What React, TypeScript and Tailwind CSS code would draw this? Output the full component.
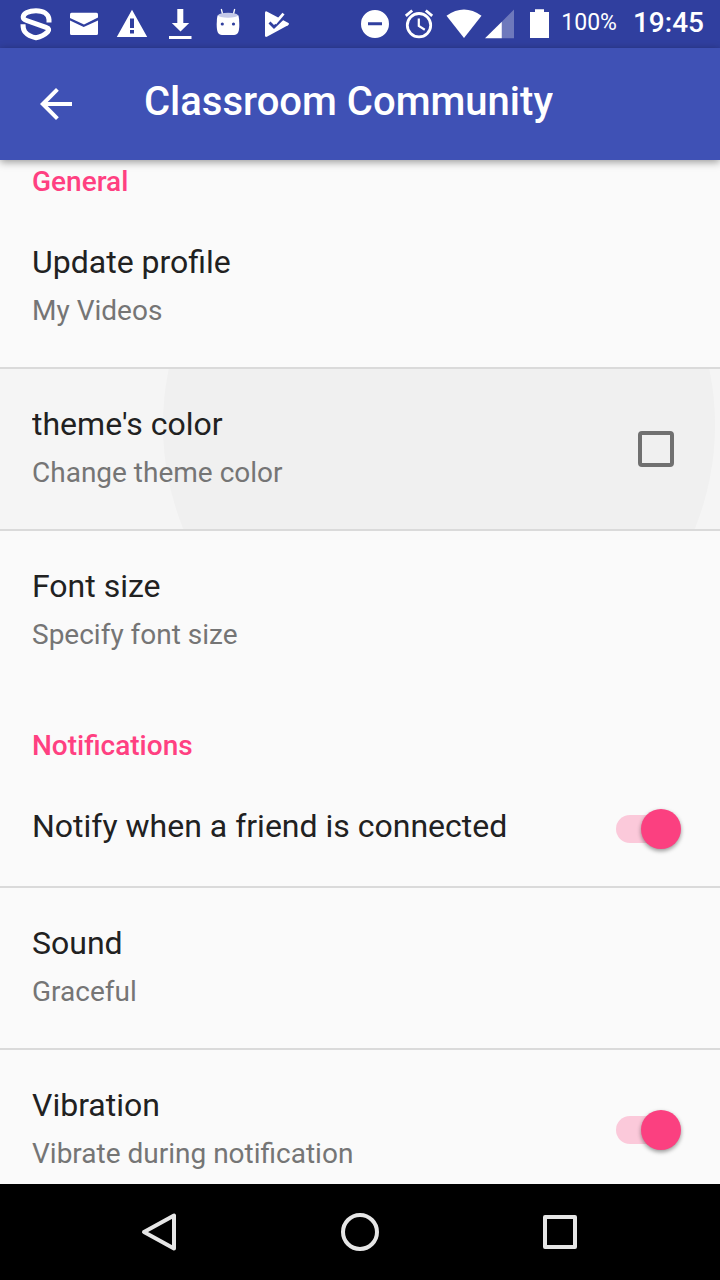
import { useState, type ReactNode } from "react";

function StatusIcon({ box, className, children }: { box: string; className: string; children: ReactNode }) {
  return (
    <svg viewBox={box} className={`h-12 shrink-0 ${className}`} fill="#fff" aria-hidden="true">
      {children}
    </svg>
  );
}

function StatusBar() {
  return (
    <div className="flex h-12 shrink-0 items-center justify-between bg-[#303f9f] pr-4 pl-3 text-white">
      <div className="flex">
        <StatusIcon box="12 0 48 48" className="w-12">
          <path
            d="M49 22.500V19.500C48.500 14 43.500 10.800 36 10.800C28.500 10.800 23.500 13.500 23.200 17C23.200 19 24 19.600 26.500 20.500L46 27.300C49.300 28.500 49.300 30 47.500 32C44.500 35 40 37 36 37.800C32 37 27.500 35 25 32C23.500 30.200 23 28 23 24.300"
            fill="none"
            stroke="#fff"
            strokeWidth="5"
          />
        </StatusIcon>
        <StatusIcon box="60 0 48 48" className="w-12">
          <path d="M71.5 12.700h25q1.500 0 1.500 1.500v3.300l-14 7-14-6.500v-3.800q0-1.500 1.500-1.500z" />
          <path d="M70 20.500l13.700 6.500L98 20.500V33.500q0 1.500-1.500 1.500h-25q-1.500 0-1.500-1.500z" />
        </StatusIcon>
        <StatusIcon box="108 0 48 48" className="w-12">
          <path fillRule="evenodd" d="M132 9.700L147.200 37H116.800zM130 18.500v9.500h4v-9.500zM130 30v3.400h4V30z" />
        </StatusIcon>
        <StatusIcon box="156 0 48 48" className="w-12">
          <path d="M177.300 9h6v14h5.900l-8.700 8.500-8.700-8.500h5.500zM169 36h22.500v3H169z" />
        </StatusIcon>
        <StatusIcon box="204 0 48 48" className="w-12">
          <path d="M221.300 9l1.500 6M234.700 9l-1.500 6" stroke="#fff" strokeWidth="1.300" />
          <path d="M217.500 15.500q10.500-4 21 0 .8 3 .8 9c0 7-1.300 10.500-5.300 10.500h-12c-4 0-5.300-3.500-5.300-10.500q0-6 .8-9z" />
          <ellipse cx="228" cy="15.300" rx="9.800" ry="2.500" fill="#c5cae9" />
          <circle cx="222.300" cy="24" r="1.600" fill="#303f9f" />
          <circle cx="233.500" cy="24" r="1.600" fill="#303f9f" />
        </StatusIcon>
        <StatusIcon box="252 0 48 48" className="w-12">
          <path d="M265 13q0-2.500 2.300-1.300L288 22.800q2 1.200 0 2.400L267.300 36.500q-2.300 1.200-2.300-1.300z" />
          <path d="M269.500 22.500l4.500 4.500L286 15.500" fill="none" stroke="#303f9f" strokeWidth="2.800" />
          <path d="M275 23.500l8.500-9.800" fill="none" stroke="#fff" strokeWidth="2.800" />
        </StatusIcon>
      </div>
      <div className="flex items-center">
        <StatusIcon box="353 0 44 48" className="w-11">
          <path fillRule="evenodd" d="M375 10a14 14 0 100 28 14 14 0 000-28zM368 22.300h14v3h-14z" />
        </StatusIcon>
        <StatusIcon box="397 0 49 48" className="w-[49px]">
          <g fill="none" stroke="#fff" strokeWidth="2.800">
            <circle cx="419" cy="25.200" r="11.700" />
            <path d="M405.800 15.800l6.400-5.300M432.200 15.800l-6.400-5.300" />
            <path d="M418.800 18.500v7.500l6 3.700" strokeWidth="2.200" />
          </g>
        </StatusIcon>
        <StatusIcon box="446 0 38 48" className="w-[38px]">
          <path d="M464 38L446.500 15.800q17.500-12.600 35 0z" />
        </StatusIcon>
        <StatusIcon box="484 0 45 48" className="w-[45px]">
          <path d="M514 9.500V38.300h-12.200V21.700z" opacity="0.3" />
          <path d="M501.800 21.700V38.300H485z" />
        </StatusIcon>
        <StatusIcon box="529 0 32 48" className="w-8">
          <path d="M535 9.300h9v2.700h5v26h-19V12h5z" />
        </StatusIcon>
        <span className="mr-4 pb-0.5 text-[23px] leading-7">100%</span>
        <span className="pb-0.5 text-[28px] leading-8 font-medium">19:45</span>
      </div>
    </div>
  );
}

function AppBar() {
  return (
    <header className="relative z-10 flex h-28 shrink-0 items-center bg-[#3f51b5] text-white shadow-[0_2px_8px_rgba(0,0,0,0.4)]">
      <button type="button" aria-label="Back" className="flex w-28 shrink-0 justify-center">
        <svg viewBox="0 0 32 32" className="size-8" fill="#fff" aria-hidden="true">
          <path d="M32 14H7.700L18.800 2.800 16 0 0 16l16 16 2.800-2.800L7.700 18H32z" />
        </svg>
      </button>
      <h1 className="truncate pb-1 pl-8 text-[40px] leading-[48px] font-medium">Classroom Community</h1>
    </header>
  );
}

function Category({ title, first = false }: { title: string; first?: boolean }) {
  return (
    <h2
      className={`px-8 pb-[9px] text-[28px] leading-8 font-medium text-[#ff4081] ${first ? "pt-[6px]" : "pt-[39px]"}`}
    >
      {title}
    </h2>
  );
}

function Texts({ title, summary }: { title: string; summary?: string }) {
  return (
    <span className={`relative block min-w-0 flex-1 ${summary ? "" : "pb-[5px]"}`}>
      <span className="block truncate text-[32px] leading-[48px] text-[#212121]">{title}</span>
      {summary && <span className="block truncate text-[28px] leading-[50px] text-[#757575]">{summary}</span>}
    </span>
  );
}

function LinkRow({ title, summary, divider = true }: { title: string; summary: string; divider?: boolean }) {
  return (
    <button
      type="button"
      className={`flex w-full items-center px-8 py-[31px] text-left ${divider ? "border-b-2 border-[#dadada]" : ""}`}
    >
      <Texts title={title} summary={summary} />
    </button>
  );
}

function CheckRow({ title, summary }: { title: string; summary: string }) {
  const [checked, setChecked] = useState(false);
  return (
    <label className="relative flex items-center overflow-hidden border-b-2 border-[#dadada] bg-[#f5f5f5] px-8 py-[31px]">
      <span className="absolute -top-[220px] left-[163px] size-[552px] rounded-full bg-[#f0f0f0]" />
      <Texts title={title} summary={summary} />
      <input
        type="checkbox"
        checked={checked}
        onChange={(e) => setChecked(e.target.checked)}
        className="relative mr-[14px] size-9 shrink-0 appearance-none rounded-sm border-4 border-[#707070] checked:bg-[#ff4081]"
      />
    </label>
  );
}

function SwitchRow({ title, summary }: { title: string; summary?: string }) {
  const [on, setOn] = useState(true);
  return (
    <label className="flex items-center border-b-2 border-[#dadada] px-8 py-[31px]">
      <Texts title={title} summary={summary} />
      <input
        type="checkbox"
        role="switch"
        checked={on}
        onChange={(e) => setOn(e.target.checked)}
        className="relative mr-3 h-7 w-15 shrink-0 appearance-none rounded-full bg-[#bdbdbd] before:absolute before:-top-1.5 before:-left-1 before:size-10 before:rounded-full before:bg-[#f5f5f5] before:shadow-[0_2px_4px_rgba(0,0,0,0.4)] checked:bg-[#fbc9da] checked:before:left-[25px] checked:before:bg-[#fb4080]"
      />
    </label>
  );
}

function NavBar() {
  return (
    <nav className="grid h-24 shrink-0 grid-cols-3 bg-black px-15">
      <button type="button" aria-label="Back" className="flex items-center justify-center">
        <svg viewBox="0 0 40 40" className="size-10" fill="none" stroke="#e6e6e6" strokeWidth="4" strokeLinejoin="round" aria-hidden="true">
          <path d="M34 3.500V36.500L4 20z" />
        </svg>
      </button>
      <button type="button" aria-label="Home" className="flex items-center justify-center">
        <svg viewBox="0 0 40 40" className="size-10" fill="none" stroke="#e6e6e6" strokeWidth="4" aria-hidden="true">
          <circle cx="20" cy="20" r="17" />
        </svg>
      </button>
      <button type="button" aria-label="Overview" className="flex items-center justify-center">
        <svg viewBox="0 0 40 40" className="size-10" fill="none" stroke="#e6e6e6" strokeWidth="4" strokeLinejoin="round" aria-hidden="true">
          <rect x="5" y="5" width="30" height="30" />
        </svg>
      </button>
    </nav>
  );
}

export default function App() {
  return (
    <div className="flex h-screen flex-col bg-[#fafafa] font-[Roboto,sans-serif]">
      <StatusBar />
      <AppBar />
      <main className="min-h-0 flex-1 overflow-y-auto [scrollbar-width:none]">
        <Category title="General" first />
        <LinkRow title="Update profile" summary="My Videos" />
        <CheckRow title="theme's color" summary="Change theme color" />
        <LinkRow title="Font size" summary="Specify font size" divider={false} />
        <Category title="Notifications" />
        <SwitchRow title="Notify when a friend is connected" />
        <LinkRow title="Sound" summary="Graceful" />
        <SwitchRow title="Vibration" summary="Vibrate during notification" />
      </main>
      <NavBar />
    </div>
  );
}
